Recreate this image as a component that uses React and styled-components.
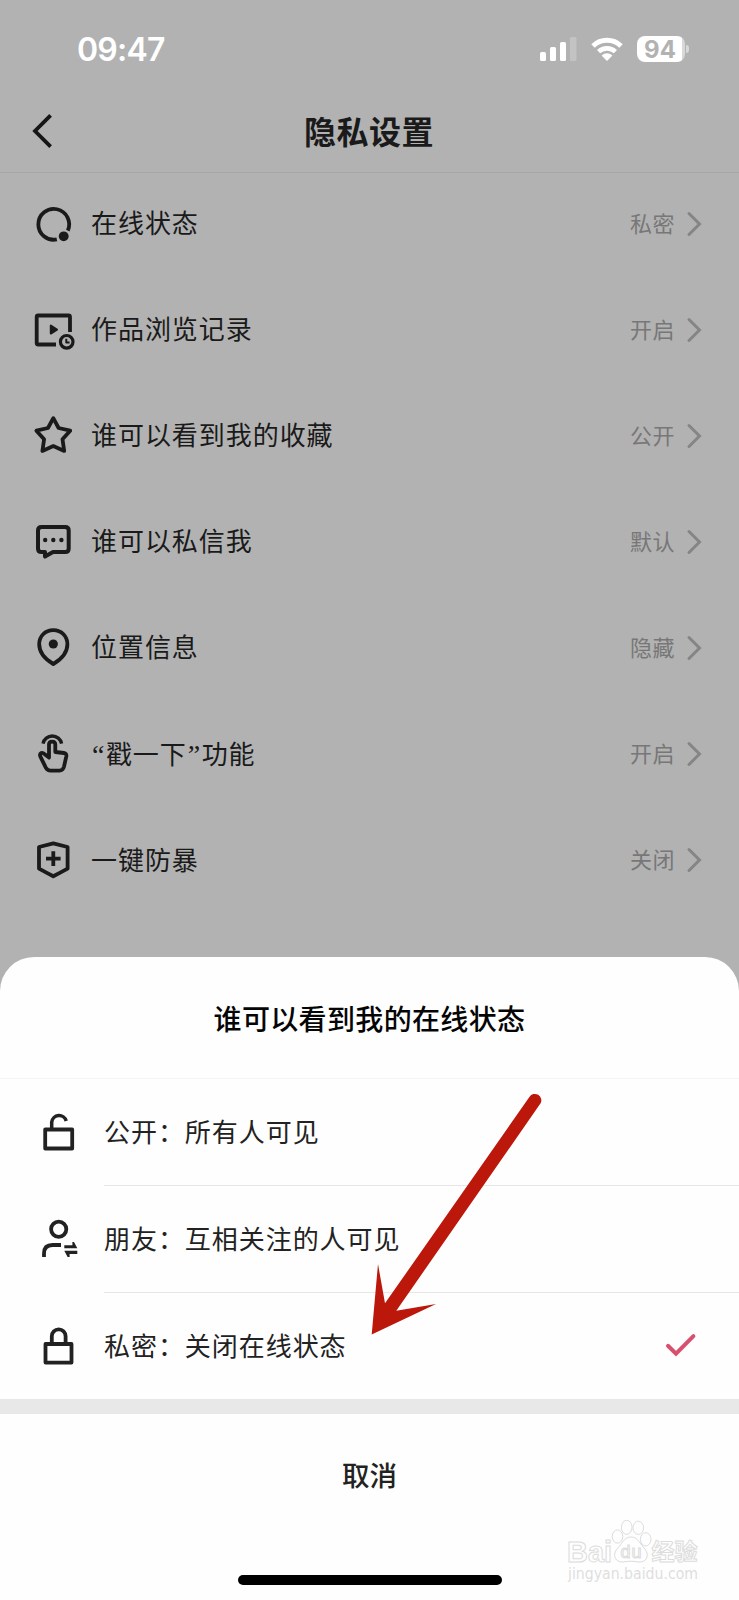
import React from 'react';
import styled, { createGlobalStyle } from 'styled-components';

const GlobalStyle = createGlobalStyle`
  * {
    box-sizing: border-box;
  }

  body {
    margin: 0;
    background: #b2b2b2;
    font-family: 'Noto Sans CJK SC', sans-serif;
  }
`;

// Page
const Screen = styled.div`
  position: relative;
  display: flex;
  flex-direction: column;
  width: 739px;
  height: 1600px;
  background: #b2b2b2;
  overflow: hidden;
`;

const StatusBar = styled.div`
  display: flex;
  align-items: center;
  height: 98px;
  padding: 0 50px 0 77px;
  color: #ffffff;
`;

const Time = styled.div`
  flex: 1;
  padding-top: 2px;
  font-family: Inter, sans-serif;
  font-size: 32px;
  font-weight: 600;
  line-height: 40px;
  letter-spacing: -0.8px;
`;

const SignalIcon = styled.svg`
  margin-right: 14px;
`;

const WifiIcon = styled.svg`
  margin-right: 14px;
`;

const Battery = styled.div`
  display: flex;
  align-items: center;
  justify-content: center;
  width: 48px;
  height: 26px;
  padding: 1px 2px 0 0;
  border-radius: 8px;
  background: linear-gradient(90deg, #ffffff 45px, #d8d8d8 45px);
  color: #b2b2b2;
  font-family: Inter, sans-serif;
  font-size: 24px;
  font-weight: 700;
  line-height: 26px;
`;

const BatteryTip = styled.div`
  width: 3px;
  height: 8px;
  margin-left: 1px;
  border-radius: 0 4px 4px 0;
  background: #d8d8d8;
`;

const Header = styled.header`
  display: grid;
  grid-template-columns: 60px 1fr 60px;
  align-items: center;
  height: 75px;
  padding-bottom: 9px;
  border-bottom: 1px solid #a6a6a6;
`;

const BackButton = styled.button`
  display: flex;
  padding: 0 0 0 30px;
  border: 0;
  background: none;
`;

const Title = styled.h1`
  margin: 0;
  padding: 0 1px 1px 0;
  font-size: 32px;
  font-weight: 700;
  line-height: 46px;
  letter-spacing: 0.5px;
  text-align: center;
  color: #1a1a1a;
`;

// Settings list
const List = styled.div`
  margin-top: -3px;
`;

const Row = styled.div`
  display: flex;
  align-items: center;
  height: 106.1px;
  padding: 0 37px 0 31px;
  color: #1a1a1a;
`;

const RowIcon = styled.svg`
  flex: none;
  width: 44px;
  height: 44px;
  margin: 1px 16px 0 0;
  fill: none;
  stroke: #1a1a1a;
  stroke-width: 3.8;
  stroke-linejoin: round;
`;

const Label = styled.div`
  flex: 1;
  padding-bottom: 2px;
  font-size: 26px;
  line-height: 40px;
  letter-spacing: 0.95px;
`;

const Quote = styled.span`
  margin: 0 0.5px 0 1px;
  font-family: 'Liberation Serif', serif;
  font-size: 28px;
  line-height: 1;
`;

const Value = styled.div`
  margin-right: 11px;
  padding-bottom: 3px;
  font-size: 22px;
  line-height: 34px;
  letter-spacing: 0.5px;
  color: #777777;
`;

const Chevron = styled.svg`
  margin-top: 1px;
  fill: none;
  stroke: #858585;
  stroke-width: 3;
  stroke-linecap: round;
`;

// Bottom sheet
const Sheet = styled.section`
  display: flex;
  flex-direction: column;
  height: 643px;
  margin-top: auto;
  border-radius: 34px 34px 0 0;
  background: #fefefe;
`;

const SheetTitle = styled.h2`
  height: 122px;
  margin: 0;
  border-bottom: 1px solid #f4f4f4;
  font-size: 28px;
  font-weight: 500;
  line-height: 122px;
  letter-spacing: 0.35px;
  text-align: center;
  color: #050505;
`;

const Option = styled.div`
  display: flex;
  height: 106.8px;
  padding-left: 36px;
  color: #222222;
`;

const OptionIcon = styled(RowIcon)`
  margin: 31px 24px 0 0;
  stroke: #222222;
`;

const OptionBody = styled.div`
  display: flex;
  flex: 1;
  align-items: center;
  justify-content: space-between;
  padding: 0 42px 2px 0;
  border-bottom: 1px solid ${({ $last }) => ($last ? 'transparent' : '#e6e6e6')};
  font-size: 26px;
  letter-spacing: 0.95px;
`;

const CheckIcon = styled.svg`
  margin-top: 2px;
`;

const Gap = styled.div`
  height: 15px;
  background: #e8e8e8;
`;

const Cancel = styled.button`
  height: 123px;
  padding: 0 0 3px;
  border: 0;
  background: none;
  font-family: inherit;
  font-size: 27.5px;
  font-weight: 500;
  color: #222222;
`;

const HomeIndicator = styled.div`
  width: 264px;
  height: 10px;
  margin: auto auto 15px;
  border-radius: 5px;
  background: #000000;
`;

const Arrow = styled.svg`
  position: absolute;
  left: 365px;
  top: 1090px;
`;

const Watermark = styled.svg`
  position: absolute;
  left: 560px;
  top: 1514px;
`;

const settings = [
  {
    id: 'online',
    label: '在线状态',
    value: '私密',
    icon: (
      <>
        <path d="M36.8 28.6 A15.4 15.4 0 1 0 25.8 37.4" />
        <circle cx="32.7" cy="34.3" r="4.9" fill="#1a1a1a" stroke="none" />
      </>
    ),
  },
  {
    id: 'history',
    label: '作品浏览记录',
    value: '开启',
    icon: (
      <>
        <path d="M25 36.5 H7.2 Q5.7 36.5 5.7 35 V9 Q5.7 7.5 7.2 7.5 H37.5 Q39 7.5 39 9 V24" />
        <path d="M19.8 17.6 V25.6 L26 21.6 Z" fill="#1a1a1a" strokeWidth="2" />
        <circle cx="35.7" cy="33.8" r="6.3" strokeWidth="3.2" />
        <path d="M35.3 30.8 V34.4 H38.6" strokeWidth="2" />
      </>
    ),
  },
  {
    id: 'favorites',
    label: '谁可以看到我的收藏',
    value: '公开',
    icon: (
      <path d="M22.3 4.2 L27.6 14 L39.2 16.7 L31.5 25.2 L33.2 36.9 L22.3 32.1 L11.4 36.9 L13.1 25.2 L5.4 16.7 L17 14 Z" />
    ),
  },
  {
    id: 'message',
    label: '谁可以私信我',
    value: '默认',
    icon: (
      <>
        <path
          d="M10.5 7 H34.2 Q37.7 7 37.7 10.5 V28.5 Q37.7 32 34.2 32 H22 L14 36.6 V32 H10.5 Q7 32 7 28.5 V10.5 Q7 7 10.5 7 Z"
          strokeWidth="4"
        />
        <g fill="#1a1a1a" stroke="none">
          <circle cx="14.2" cy="20" r="2.2" />
          <circle cx="22.3" cy="20" r="2.2" />
          <circle cx="30.4" cy="20" r="2.2" />
        </g>
      </>
    ),
  },
  {
    id: 'location',
    label: '位置信息',
    value: '隐藏',
    icon: (
      <>
        <path d="M22.3 4.2 C14 4.2 8.2 10.4 8.2 18.2 C8.2 26.8 14.6 33.4 22.3 38 C30 33.4 36.4 26.8 36.4 18.2 C36.4 10.4 30.6 4.2 22.3 4.2 Z" />
        <circle cx="22.3" cy="18" r="4.6" fill="#1a1a1a" stroke="none" />
      </>
    ),
  },
  {
    id: 'poke',
    label: (
      <>
        <Quote>“</Quote>戳一下<Quote>”</Quote>功能
      </>
    ),
    value: '开启',
    icon: (
      <>
        <path d="M12 11.6 A9.5 9.5 0 0 1 30.6 11.6" strokeWidth="3.4" />
        <path d="M18 25.6 V12.6 Q18 9.6 21.1 9.6 Q24.3 9.6 24.3 12.6 V20 L33 21 Q35.8 21.4 35.3 24.4 L33 34.6 Q32 38.6 28.4 38.6 H19.6 Q16.4 38.6 14.8 35.6 L9.4 24.6 Q8.4 21.8 10.2 21 Q11.8 20.4 13.4 22 Z" />
      </>
    ),
  },
  {
    id: 'protect',
    label: '一键防暴',
    value: '关闭',
    icon: (
      <>
        <path d="M22.3 5.3 L36.6 9 V30.6 Q30 34.2 22.3 38.3 Q14.6 34.2 8 30.6 V9 Z" />
        <path d="M15 20.6 H29.6 M22.3 13.3 V28" />
      </>
    ),
  },
];

const options = [
  {
    label: '公开：所有人可见',
    icon: (
      <>
        <rect x="9.2" y="19.5" width="27" height="19" />
        <path d="M15.7 19 V12.2 A7.4 7.4 0 0 1 30.2 11" strokeWidth="3.5" />
      </>
    ),
  },
  {
    label: '朋友：互相关注的人可见',
    icon: (
      <>
        <circle cx="22.7" cy="12.2" r="7.6" />
        <path d="M8 40 V36.5 Q8 28 16.5 28 H25" />
        <g fill="#222222" stroke="none">
          <path d="M28.3 28.3 H36.4 V25.1 H38 L41.3 31.3 H28.3 Z" />
          <path d="M41.3 33.7 H28.3 L31.6 39.9 H33.6 V36.9 H41.3 Z" />
        </g>
      </>
    ),
  },
  {
    label: '私密：关闭在线状态',
    selected: true,
    icon: (
      <>
        <rect x="9.5" y="20" width="26" height="18.6" />
        <path d="M15.8 19.7 V12.2 A6.9 6.9 0 0 1 29.6 12.2 V19.7" />
      </>
    ),
  },
];

const App = () => {
  return (
    <>
      <GlobalStyle />
      <Screen>
        <StatusBar>
          <Time>09:47</Time>
          <SignalIcon width="37" height="24" viewBox="0 0 37 24" fill="#ffffff">
            <rect x="0" y="15" width="6" height="9" rx="1.5" />
            <rect x="10" y="10" width="6" height="14" rx="1.5" />
            <rect x="20" y="5" width="6" height="19" rx="1.5" />
            <rect x="30" y="0" width="6.5" height="24" rx="1.5" opacity="0.22" />
          </SignalIcon>
          <WifiIcon width="32" height="24" viewBox="0 0 32 24" fill="none" stroke="#ffffff" strokeWidth="5">
            <path d="M2 9 A20 20 0 0 1 30 9" />
            <path d="M7.6 14.7 A12.2 12.2 0 0 1 24.4 14.7" strokeWidth="4.6" />
            <path d="M16 24 L10.6 18.4 A8 8 0 0 1 21.4 18.4 Z" fill="#ffffff" stroke="none" />
          </WifiIcon>
          <Battery>94</Battery>
          <BatteryTip />
        </StatusBar>

        <Header>
          <BackButton aria-label="返回">
            <svg width="22" height="36" viewBox="0 0 22 36" fill="none" stroke="#161616" strokeWidth="3.8">
              <path d="M20.6 2.3 L5 18 L20.6 33.7" />
            </svg>
          </BackButton>
          <Title>隐私设置</Title>
        </Header>

        <List>
          {settings.map((item) => (
            <Row key={item.id}>
              <RowIcon viewBox="0 0 44 44">{item.icon}</RowIcon>
              <Label>{item.label}</Label>
              <Value>{item.value}</Value>
              <Chevron width="16" height="26" viewBox="0 0 16 26">
                <path d="M3 2.5 L13.5 13 L3 23.5" />
              </Chevron>
            </Row>
          ))}
        </List>

        <Sheet>
          <SheetTitle>谁可以看到我的在线状态</SheetTitle>
          {options.map((option, index) => (
            <Option key={option.label}>
              <OptionIcon viewBox="0 0 44 44">{option.icon}</OptionIcon>
              <OptionBody $last={index === options.length - 1}>
                {option.label}
                {option.selected && (
                  <CheckIcon width="32" height="24" viewBox="0 0 32 24" fill="none" stroke="#d9506f" strokeWidth="4" strokeLinecap="round">
                    <path d="M3 12.8 L11 20.6 L28.4 3.2" />
                  </CheckIcon>
                )}
              </OptionBody>
            </Option>
          ))}
          <Gap />
          <Cancel>取消</Cancel>
          <HomeIndicator />
        </Sheet>

        <Arrow width="185" height="250" viewBox="365 1090 185 250" fill="#bb170b">
          <path d="M371.7 1334.5 L378 1264 L385 1303.3 L529.4 1097 A6.4 6.4 0 0 1 540.4 1103.6 L396.3 1310.7 L436 1304 Z" />
        </Arrow>

        <Watermark width="150" height="76" viewBox="560 1514 150 76" fill="#fefefe" stroke="#dcdcdc">
          <ellipse cx="617.5" cy="1536.5" rx="5.3" ry="6.6" />
          <ellipse cx="626.7" cy="1527.3" rx="5.3" ry="7" />
          <ellipse cx="638.3" cy="1527.8" rx="5.3" ry="6.6" />
          <ellipse cx="645.7" cy="1539.3" rx="5.3" ry="6.6" />
          <path d="M631 1537 C638 1537 640 1544 645 1549 C650 1556 646 1562.5 639 1562 C633 1561 629 1561 623 1562 C616 1562.5 612 1556 616.5 1549.5 C622 1544 624 1537 631 1537 Z" />
          <g fontFamily="'Liberation Sans', sans-serif">
            <text x="567" y="1561.5" fontSize="29" fontWeight="700" textLength="45" lengthAdjust="spacingAndGlyphs">Bai</text>
            <text x="620.5" y="1558" fontSize="18" textLength="21">du</text>
          </g>
          <text x="651.5" y="1560" fontFamily="'Noto Sans CJK SC', sans-serif" fontSize="23" fontWeight="700">经验</text>
          <text
            x="568"
            y="1579"
            fill="#dedede"
            stroke="none"
            fontFamily="'DejaVu Sans', sans-serif"
            fontSize="15"
            textLength="130"
            lengthAdjust="spacingAndGlyphs"
          >
            jingyan.baidu.com
          </text>
        </Watermark>
      </Screen>
    </>
  );
};

export default App;
